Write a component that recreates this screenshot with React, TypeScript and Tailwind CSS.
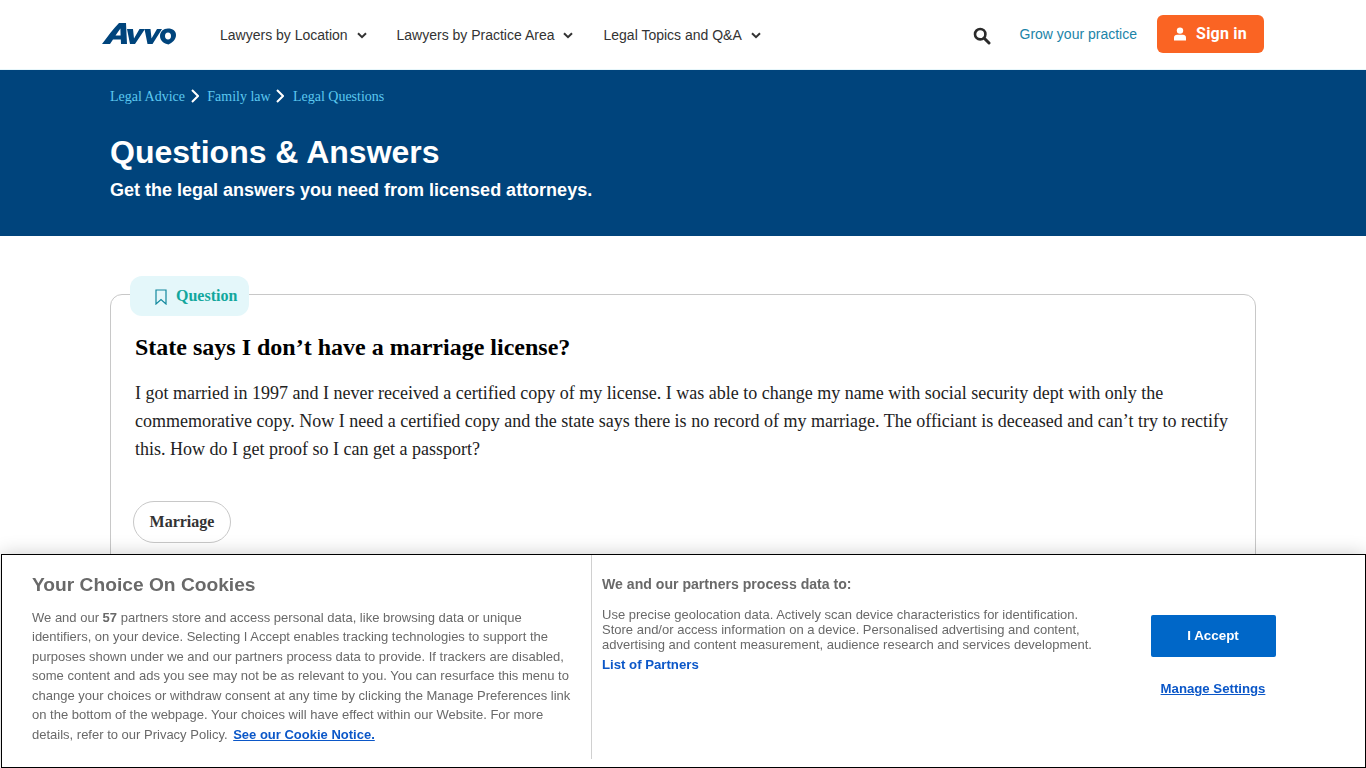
import React from "react";

const sans = "font-['Liberation_Sans',Arial,sans-serif]";
const serif = "font-['Liberation_Serif','Times_New_Roman',serif]";

function Chevron() {
  return (
    <svg width="10" height="7" viewBox="0 0 10 7" className="ml-[9px] mt-[1px]" fill="none">
      <path d="M1 1.2 L5 5.2 L9 1.2" stroke="#333" strokeWidth="2" />
    </svg>
  );
}

function NavItem({ label, w }: { label: string; w: string }) {
  return (
    <div className={`flex items-center text-sm text-[#333] ${w}`}>
      <span>{label}</span>
      <Chevron />
    </div>
  );
}

function Crumb() {
  return (
    <svg width="8" height="14" viewBox="0 0 8 14" className="ml-[5.5px] mr-[8.75px] mb-[3px]" fill="none">
      <path d="M1 1 L7 7 L1 13" stroke="#fff" strokeWidth="2" />
    </svg>
  );
}

export default function App() {
  return (
    <div className={`h-screen overflow-hidden bg-white ${sans}`}>
      <header className="h-[70px] flex items-center pl-[102px] pr-[102px] border-b border-[#e6f6fb]">
        <svg width="74" height="23" viewBox="0 0 74 23" className="mr-[44px] mb-[3px]">
          <g fill="#00447c">
            <path d="M0 22 C6 14 11 7 17 1 L24 1 L25 22 L19 22 L18.8 17.5 L11 17.5 L8 22 Z M13.5 13.5 L18.6 13.5 L18.4 6.5 Z" fillRule="evenodd" />
            <path d="M25 7 L31 7 L32 16.5 L37.5 7 L43 7 L33 22 L28 22 Z" />
            <path d="M42.5 7 L48.5 7 L49.5 16.5 L55 7 L60 7 L50.5 22 L45.5 22 Z" />
            <path d="M66 6.5 C71 6.5 74 9 74 13 C74 18 70 20.5 66.5 22.5 C62 21.5 58 19 58 14 C58 9.5 61.5 6.5 66 6.5 Z M66 10.5 C64 10.5 63 12 63 14 C63 16 64.2 17.5 66 17.5 C68 17.5 69 16 69 14 C69 12 68 10.5 66 10.5 Z" fillRule="evenodd" />
          </g>
        </svg>
        <NavItem label="Lawyers by Location" w="w-[176.5px]" />
        <NavItem label="Lawyers by Practice Area" w="w-[207px]" />
        <NavItem label="Legal Topics and Q&A" w="w-[200px]" />
        <div className="ml-auto flex items-center">
          <svg width="18" height="18" viewBox="0 0 18 18" fill="none" className="mr-[29px] mt-[2px]">
            <circle cx="7.2" cy="7.2" r="5.2" stroke="#2b2b2b" strokeWidth="2.6" />
            <path d="M11 11 L16 16" stroke="#2b2b2b" strokeWidth="3" strokeLinecap="round" />
          </svg>
          <span className="text-sm text-[#1b84a8] mr-[20px] mb-[2px]">Grow your practice</span>
          <div className="mb-[2px] w-[107px] h-[38px] rounded-[6px] bg-[#fa6423] flex items-center justify-center text-white font-['Roboto',sans-serif] font-bold text-base tracking-[0.2px]">
            <svg width="12" height="14" viewBox="0 0 12 14" fill="#fff" className="mr-[10px]">
              <circle cx="6" cy="3.6" r="3.2" />
              <path d="M0 13.6 V10.5 C0 8.8 1.5 7.8 3 7.8 H9 C10.5 7.8 12 8.8 12 10.5 V13.6 Z" />
            </svg>
            Sign in
          </div>
        </div>
      </header>

      <section className="h-[166px] bg-[#00447c] pl-[110px]">
        <nav className={`flex items-center pt-[19px] h-[35px] text-sm text-[#5cc8f0] ${serif}`}>
          <span>Legal Advice</span>
          <Crumb />
          <span>Family law</span>
          <Crumb />
          <span>Legal Questions</span>
        </nav>
        <h1 className="mt-[27px] text-[32px] leading-[40px] font-bold text-white">Questions &amp; Answers</h1>
        <p className="mt-[8px] text-lg leading-[20px] font-bold text-white">Get the legal answers you need from licensed attorneys.</p>
      </section>

      <main className="relative mx-[110px] mt-[58px] h-[400px] border border-[#c8c8c8] rounded-[12px] pl-[24px] pr-[20px] bg-white">
        <div className={`absolute left-[19px] top-[-19px] w-[119px] h-[40px] rounded-[12px] bg-[#e4f7fa] flex items-center pl-[25px] text-[#12a79d] font-bold text-base ${serif}`}>
          <svg width="12" height="16" viewBox="0 0 12 16" fill="none" className="mr-[9px] mt-[1px]">
            <path d="M1 1 H11 V15 L6 10.5 L1 15 Z" stroke="#12889d" strokeWidth="1.2" />
          </svg>
          Question
        </div>
        <h2 className={`pt-[38px] text-2xl leading-[28px] font-bold text-black ${serif}`}>
          State says I don’t have a marriage license?
        </h2>
        <p className={`mt-[18px] text-lg leading-[28px] text-[#222] ${serif}`}>
          I got married in 1997 and I never received a certified copy of my license. I was able to change my name with social security dept with only the commemorative copy. Now I need a certified copy and the state says there is no record of my marriage. The officiant is deceased and can’t try to rectify this. How do I get proof so I can get a passport?
        </p>
        <div className={`mt-[38px] -ml-[2px] w-[98px] h-[42px] rounded-full border border-[#c8c8c8] flex items-center justify-center font-bold text-base text-[#333] ${serif}`}>
          Marriage
        </div>
      </main>

      <div className="fixed left-0 right-0 bottom-0 h-[214px] bg-white border border-black shadow-[0_0_18px_rgba(0,0,0,0.2)] ml-[1px] flex text-[#696969]">
        <div className="w-[590px] shrink-0 h-[204px] pl-[30px] pr-[19px] pt-[17.5px] border-r border-[#d0d0d0]">
          <h3 className="text-[19.2px] leading-[24px] font-bold text-[#696969]">Your Choice On Cookies</h3>
          <p className="mt-[11px] text-[13px] leading-[19.5px]">
            We and our <b>57</b> partners store and access personal data, like browsing data or unique identifiers, on your device. Selecting I Accept enables tracking technologies to support the purposes shown under we and our partners process data to provide. If trackers are disabled, some content and ads you see may not be as relevant to you. You can resurface this menu to change your choices or withdraw consent at any time by clicking the Manage Preferences link on the bottom of the webpage. Your choices will have effect within our Website. For more details, refer to our Privacy Policy.{" "}
            <a className="ml-[2px] font-bold text-[#0b57c8] underline">See our Cookie Notice.</a>
          </p>
        </div>
        <div className="relative flex-1">
          <h4 className="absolute left-[10px] top-[21px] text-[14.1px] leading-[16px] font-bold whitespace-nowrap">We and our partners process data to:</h4>
          <div className="pl-[10px] pt-[52px] w-[505px] text-[13px] leading-[15px]">
            <p>Use precise geolocation data. Actively scan device characteristics for identification. Store and/or access information on a device. Personalised advertising and content, advertising and content measurement, audience research and services development.</p>
            <a className="block mt-[5px] font-bold text-[#0b57c8] text-[13.2px]">List of Partners</a>
          </div>
        </div>
        <div className="w-[214px] mr-[45px] shrink-0 flex flex-col items-center">
          <button className="mt-[60px] w-[125px] h-[42px] rounded-[2px] bg-[#0067c8] text-white text-[13.4px] font-bold">I Accept</button>
          <a className="mt-[24px] text-[13.2px] leading-[16px] font-bold text-[#0b57c8] underline">Manage Settings</a>
        </div>
      </div>
    </div>
  );
}
